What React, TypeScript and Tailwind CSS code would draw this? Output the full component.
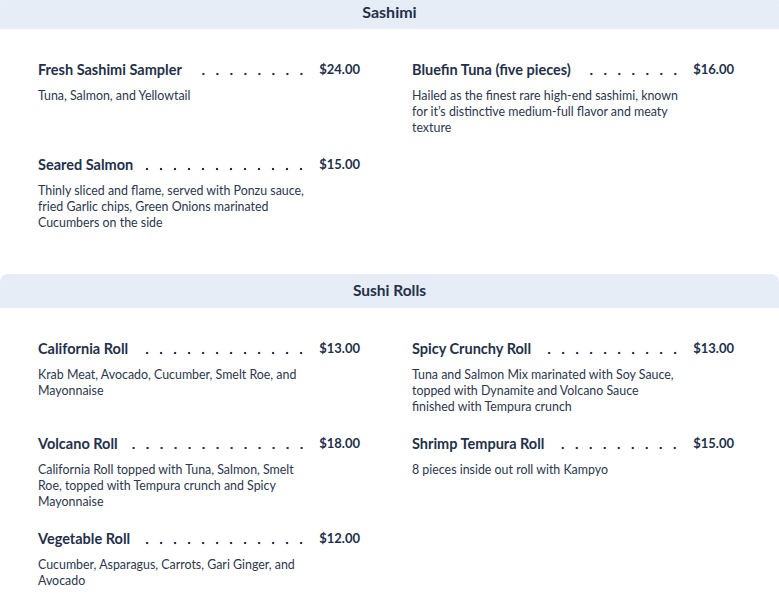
import React from 'react';

type Item = { name: string; price: string; desc: string };

const sections: { title: string; items: Item[] }[] = [
    {
        title: 'Sashimi',
        items: [
            { name: 'Fresh Sashimi Sampler', price: '$24.00', desc: 'Tuna, Salmon, and Yellowtail' },
            {
                name: 'Bluefin Tuna (five pieces)',
                price: '$16.00',
                desc: 'Hailed as the finest rare high-end sashimi, known for it’s distinctive medium-full flavor and meaty texture',
            },
            {
                name: 'Seared Salmon',
                price: '$15.00',
                desc: 'Thinly sliced and flame, served with Ponzu sauce, fried Garlic chips, Green Onions marinated Cucumbers on the side',
            },
        ],
    },
    {
        title: 'Sushi Rolls',
        items: [
            { name: 'California Roll', price: '$13.00', desc: 'Krab Meat, Avocado, Cucumber, Smelt Roe, and Mayonnaise' },
            {
                name: 'Spicy Crunchy Roll',
                price: '$13.00',
                desc: 'Tuna and Salmon Mix marinated with Soy Sauce, topped with Dynamite and Volcano Sauce finished with Tempura crunch',
            },
            {
                name: 'Volcano Roll',
                price: '$18.00',
                desc: 'California Roll topped with Tuna, Salmon, Smelt Roe, topped with Tempura crunch and Spicy Mayonnaise',
            },
            { name: 'Shrimp Tempura Roll', price: '$15.00', desc: '8 pieces inside out roll with Kampyo' },
            { name: 'Vegetable Roll', price: '$12.00', desc: 'Cucumber, Asparagus, Carrots, Gari Ginger, and Avocado' },
        ],
    },
];

function MenuItem({ item }: { item: Item }) {
    return (
        <div className="flex flex-col min-h-[76px]">
            <div className="flex items-center h-[20px]">
                <span className="text-[14.5px] font-bold whitespace-nowrap text-[#243049]">{item.name}</span>
                {/* dotted leader, tiles aligned to the price side */}
                <div className="flex-1 h-[20px] ml-[12px] mr-[14px] bg-[radial-gradient(circle_at_10px_14px,#243049_1.2px,transparent_1.6px)] bg-[length:14px_20px] bg-repeat-x bg-right" />
                <span className="text-[13px] font-bold whitespace-nowrap text-[#243049]">{item.price}</span>
            </div>
            <p className="mt-[8px] w-[267px] text-[12.4px] leading-[16px] text-[#2c364d]">{item.desc}</p>
        </div>
    );
}

export default function App() {
    return (
        <div className="w-[779px] h-[607px] overflow-hidden bg-white font-['Lato',sans-serif]">
            {sections.map((section, idx) => (
                <div key={section.title} className={idx === 0 ? '-mt-[5px]' : 'mt-[43px]'}>
                    <div className="h-[34px] flex items-center justify-center rounded-t-[8px] bg-[#e6edf7]">
                        <h2 className={`${idx === 0 ? 'text-[16px]' : 'text-[15.5px]'} font-bold text-[#243049]`}>{section.title}</h2>
                    </div>
                    <div className="grid grid-cols-[322px_322px] gap-x-[52px] gap-y-[19px] pl-[38px] pt-[31px]">
                        {section.items.map((item) => (
                            <MenuItem key={item.name} item={item} />
                        ))}
                    </div>
                </div>
            ))}
        </div>
    );
}
